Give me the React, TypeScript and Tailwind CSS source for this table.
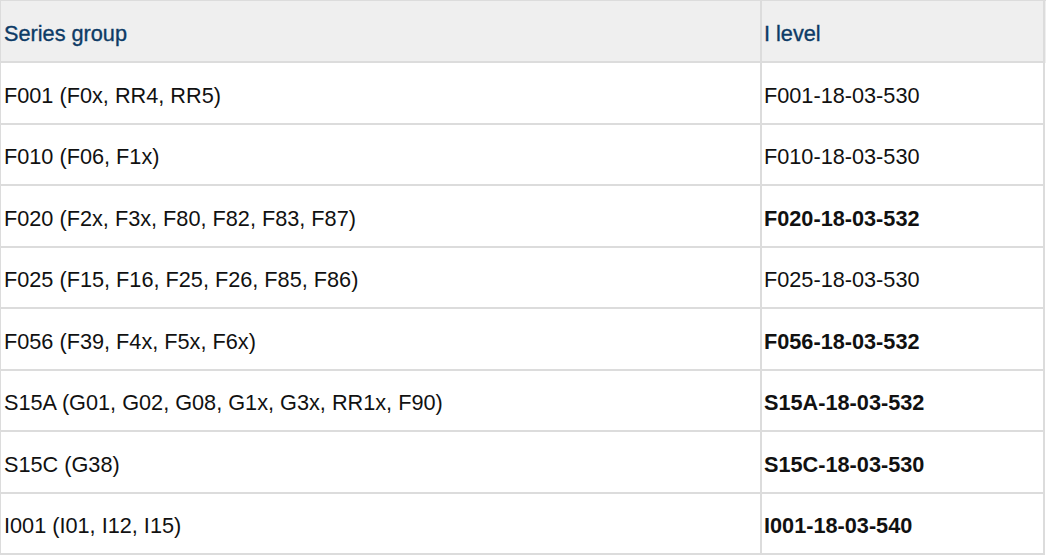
type Row = {
  group: string;
  level: string;
  bold?: boolean;
};

const rows: Row[] = [
  { group: "F001 (F0x, RR4, RR5)", level: "F001-18-03-530" },
  { group: "F010 (F06, F1x)", level: "F010-18-03-530" },
  { group: "F020 (F2x, F3x, F80, F82, F83, F87)", level: "F020-18-03-532", bold: true },
  { group: "F025 (F15, F16, F25, F26, F85, F86)", level: "F025-18-03-530" },
  { group: "F056 (F39, F4x, F5x, F6x)", level: "F056-18-03-532", bold: true },
  { group: "S15A (G01, G02, G08, G1x, G3x, RR1x, F90)", level: "S15A-18-03-532", bold: true },
  { group: "S15C (G38)", level: "S15C-18-03-530", bold: true },
  { group: "I001 (I01, I12, I15)", level: "I001-18-03-540", bold: true },
];

export default function App() {
  return (
    <div className="h-[556px] w-[1046px] overflow-hidden bg-white font-['Liberation_Sans',Arial,sans-serif] text-[21.7px] leading-none">
      <div className="w-[1046px] border-l border-t border-[#dcdcdc]">
        {/* header */}
        <div className="grid h-[62px] grid-cols-[761px_283px] bg-[#efefef] text-[#0d3b66] [-webkit-text-stroke:0.35px_#0d3b66]">
          <div className="flex items-center border-b-2 border-r-2 border-[#dcdcdc] pl-[3px] pt-[5px]">
            Series group
          </div>
          <div className="flex items-center border-b-2 border-r-2 border-[#dcdcdc] pl-[2px] pt-[5px]">
            I level
          </div>
        </div>

        {rows.map((row) => (
          <div
            key={row.level}
            className="grid h-[61.5px] grid-cols-[761px_283px] text-[#111]"
          >
            <div className="flex items-center border-b-2 border-r-2 border-[#dcdcdc] pl-[3px] pt-[6px]">
              {row.group}
            </div>
            <div
              className={`flex items-center border-b-2 border-r-2 border-[#dcdcdc] pl-[2px] pt-[6px] ${
                row.bold ? "font-bold" : ""
              }`}
            >
              {row.level}
            </div>
          </div>
        ))}
      </div>
    </div>
  );
}
